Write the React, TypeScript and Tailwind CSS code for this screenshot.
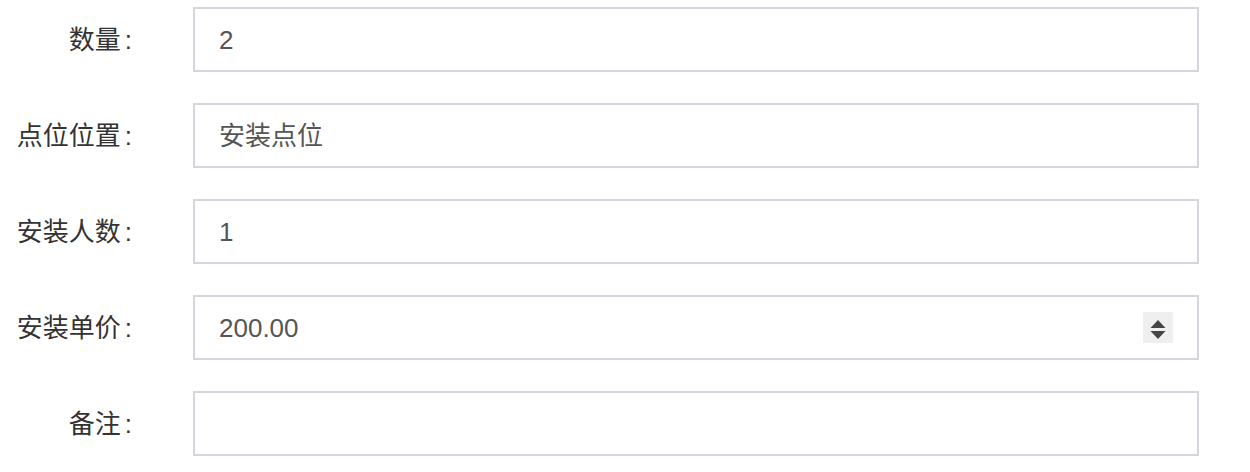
import React from 'react';

interface FieldRow {
  label: string;
  value: string;
  spinner?: boolean;
}

const rows: FieldRow[] = [
  { label: '数量', value: '2' },
  { label: '点位位置', value: '安装点位' },
  { label: '安装人数', value: '1' },
  { label: '安装单价', value: '200.00', spinner: true },
  { label: '备注', value: '' },
];

const Spinner: React.FC = () => (
  <div className="w-[30px] h-[31px] bg-[#efefef] flex items-center justify-center">
    <svg width="16" height="24" viewBox="0 0 16 24">
      <polygon points="8,4 15.5,12 0.5,12" fill="#444" />
      <polygon points="0.5,15 15.5,15 8,23" fill="#444" />
    </svg>
  </div>
);

const App: React.FC = () => {
  return (
    <div
      className="w-[1250px] h-[472px] bg-white pt-[7px]"
      style={{ fontFamily: '"Liberation Sans", "Noto Sans CJK SC", sans-serif' }}
    >
      <div className="grid grid-cols-[132px_1006px] gap-x-[61px] gap-y-[31px]">
        {rows.map(row => (
          <React.Fragment key={row.label}>
            <div className="h-[65px] flex items-center justify-end text-[26px] leading-none text-[#333] whitespace-nowrap">
              <span>{row.label}</span>
              <span className="ml-[4px]">:</span>
            </div>
            <div className="h-[65px] border-2 border-[#d4d6df] bg-white flex items-center justify-between pl-[24px] pr-[24px]">
              <span className="text-[26px] leading-none text-[#555]">{row.value}</span>
              {row.spinner && <Spinner />}
            </div>
          </React.Fragment>
        ))}
      </div>
    </div>
  );
};

export default App;
